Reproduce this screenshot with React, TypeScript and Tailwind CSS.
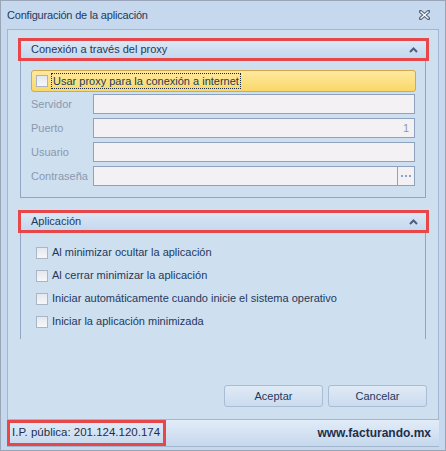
const font = { fontFamily: '"Liberation Sans", Arial, sans-serif' };

function CheckBox() {
  return (
    <span className="block w-[12px] h-[12px] shrink-0 border border-[#a9b6c8] bg-gradient-to-b from-[#e4e8ee] to-[#f6f7f9]" />
  );
}

function GroupHeader({ title }: { title: string }) {
  return (
    <div className="ml-[10px] mr-[9px] h-[23px] border-[3px] border-[#e8474a] bg-gradient-to-b from-[#dae7f5] to-[#c5d8ee] flex items-center justify-between pl-[10px] pr-[8px]">
      <span className="text-[11px] text-[#1e395b]">{title}</span>
      <svg width="9" height="6" viewBox="0 0 9 6">
        <path d="M1 5 L4.5 1.5 L8 5" fill="none" stroke="#4b5f82" strokeWidth="2" />
      </svg>
    </div>
  );
}

function Field({ label, value, dots }: { label: string; value?: string; dots?: boolean }) {
  return (
    <div className="flex items-center h-[20px]">
      <span className="w-[62px] text-[11px] text-[#8b98ae]">{label}</span>
      <div className="w-[322px] h-[20px] border border-[#8ea1bd] bg-[#f3f1f4] flex items-center justify-end">
        {value && <span className="pr-[5px] text-[11px] text-[#8b98ae]">{value}</span>}
        {dots && (
          <span className="w-[17px] h-full border-l border-[#8ea1bd] flex items-center justify-center">
            <svg width="10" height="2" viewBox="0 0 10 2">
              <rect x="0" y="0" width="2" height="2" fill="#8ea3c4" />
              <rect x="4" y="0" width="2" height="2" fill="#8ea3c4" />
              <rect x="8" y="0" width="2" height="2" fill="#8ea3c4" />
            </svg>
          </span>
        )}
      </div>
    </div>
  );
}

const opciones = [
  "Al minimizar ocultar la aplicación",
  "Al cerrar minimizar la aplicación",
  "Iniciar automáticamente cuando inicie el sistema operativo",
  "Iniciar la aplicación minimizada",
];

export default function App() {
  return (
    <div style={font} className="w-[446px] h-[451px] border border-[#9aa6b8] bg-[#c6d8ee] flex flex-col">
      {/* title bar */}
      <div className="h-[28px] shrink-0 flex items-center justify-between pl-[6px] pr-[15px]">
        <span className="text-[11px] text-[#1e395b] tracking-[-0.2px]">Configuración de la aplicación</span>
        <svg width="11" height="10" viewBox="0 0 11 10">
          <path d="M1.5 1.5 L9.5 8.5 M9.5 1.5 L1.5 8.5" stroke="#56657a" strokeWidth="3.4" strokeLinecap="square" />
          <path d="M1.5 1.5 L9.5 8.5 M9.5 1.5 L1.5 8.5" stroke="#ffffff" strokeWidth="1.2" />
        </svg>
      </div>

      {/* content */}
      <div className="mx-[6px] h-[391px] shrink-0 border border-[#a3b6cf] bg-[#cedff0] flex flex-col pt-[8px]">
        <GroupHeader title="Conexión a través del proxy" />
        <div className="mx-[12px] border-l border-r border-b border-[#8fa5c2] pt-[9px] pb-[11px] pl-[10px] pr-[9px]">
          <div className="h-[22px] rounded-[3px] border border-[#d6a74d] bg-gradient-to-b from-[#fde9a0] to-[#fad866] flex items-center pl-[4px]">
            <CheckBox />
            <span className="ml-[3px] px-[1px] border border-dotted border-[#1e2a44] text-[11px] text-[#1e395b] leading-[14px]">
              Usar proxy para la conexión a internet
            </span>
          </div>
          <div className="mt-[2px] flex flex-col gap-[4px]">
            <Field label="Servidor" />
            <Field label="Puerto" value="1" />
            <Field label="Usuario" />
            <Field label="Contraseña" dots />
          </div>
        </div>

        <div className="mt-[12px]">
          <GroupHeader title="Aplicación" />
        </div>
        <div className="mx-[12px] h-[106px] border-l border-r border-[#8fa5c2] pt-[8px] pl-[15px]">
          {opciones.map((o) => (
            <div key={o} className="h-[23px] flex items-center gap-[4px]">
              <CheckBox />
              <span className="text-[11px] text-[#1e395b]">{o}</span>
            </div>
          ))}
        </div>

        <div className="flex-1" />
        <div className="flex justify-end gap-[5px] pr-[11px] pb-[12px]">
          {["Aceptar", "Cancelar"].map((b) => (
            <button
              key={b}
              className="w-[99px] h-[22px] rounded-[3px] border border-[#a9bcd5] bg-gradient-to-b from-[#e0eaf6] to-[#cbdbee] text-[11px] text-[#1e395b]"
            >
              {b}
            </button>
          ))}
        </div>
      </div>

      {/* status bar */}
      <div className="mx-[6px] h-[27px] shrink-0 border-b border-[#a3b6cf] bg-gradient-to-b from-[#e2ecf8] to-[#c6d8ed] flex items-center justify-between">
        <div className="h-full w-[159px] border-[3px] border-[#e8474a] flex items-center pl-[2px]">
          <span className="text-[11.5px] text-[#1e2f4a]">I.P. pública: 201.124.120.174</span>
        </div>
        <span className="pr-[8px] text-[12px] font-bold text-[#1e2f4a]">www.facturando.mx</span>
      </div>
    </div>
  );
}
